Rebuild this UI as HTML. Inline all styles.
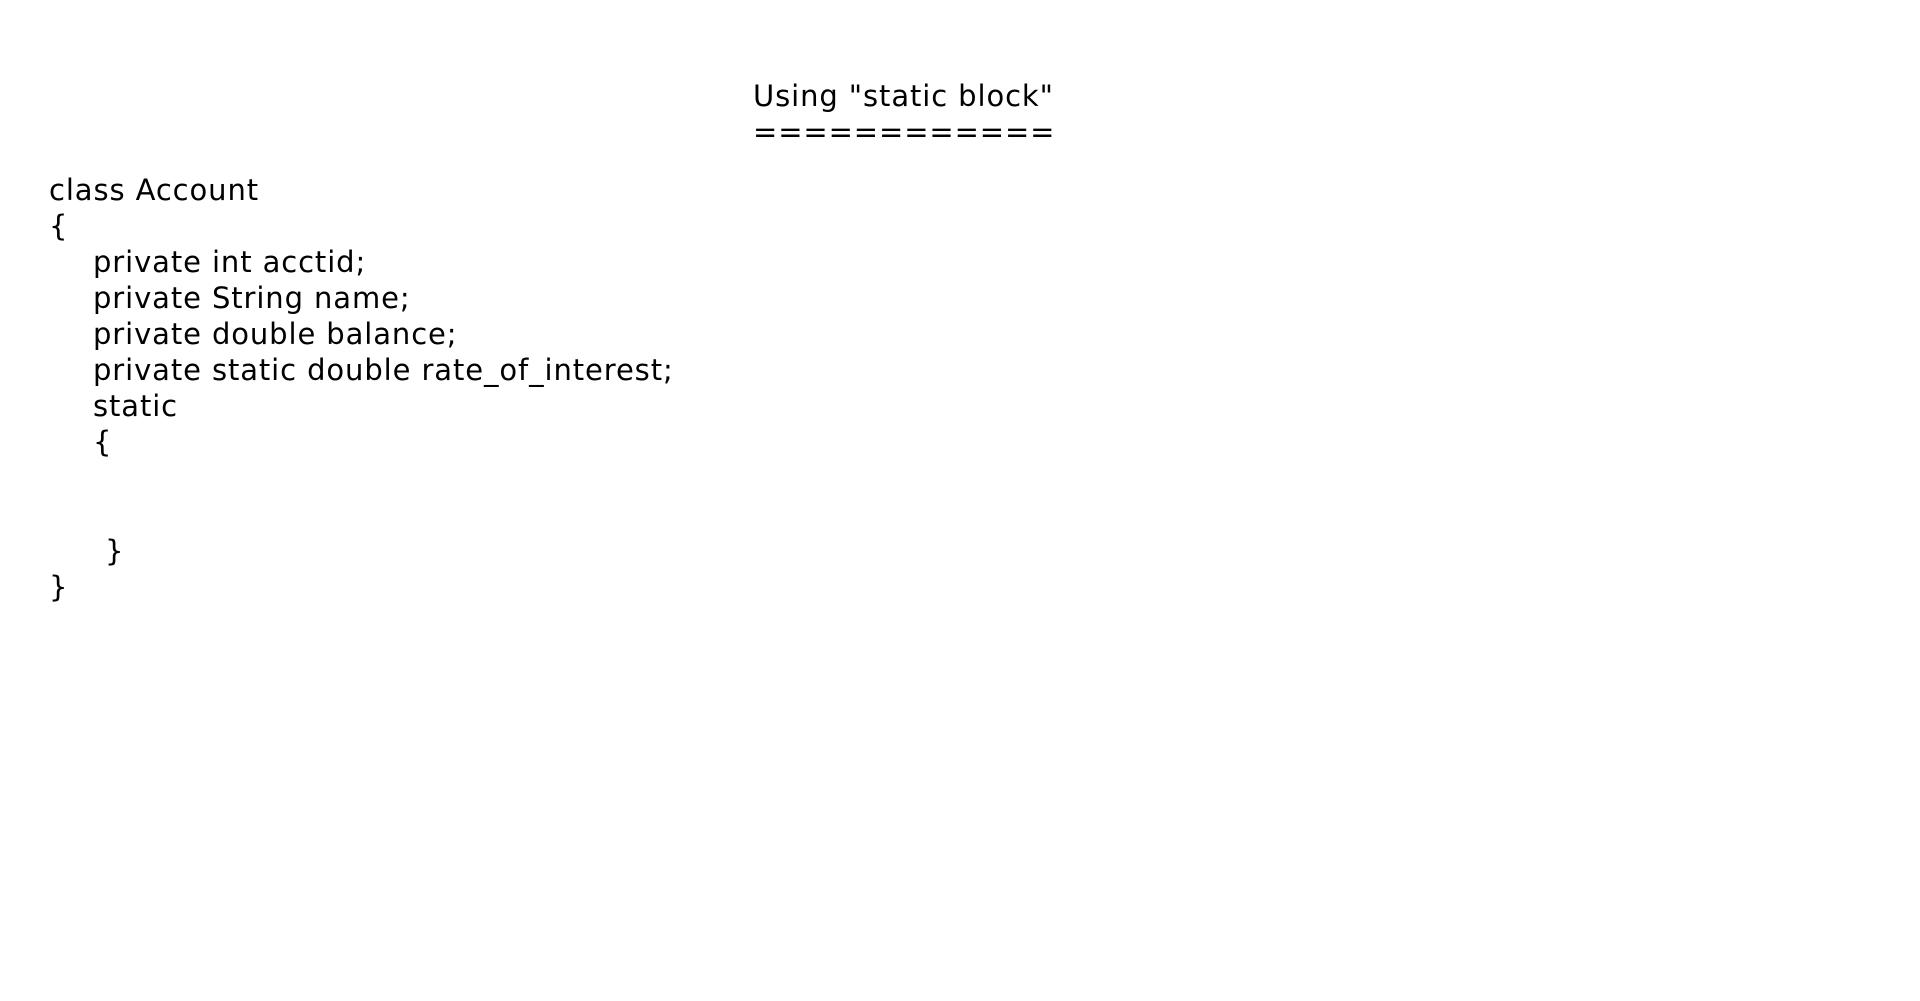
<!DOCTYPE html>
<html><head><meta charset="utf-8"><style>
html,body{margin:0;padding:0;background:#fff;width:1920px;height:1001px;overflow:hidden}
.t{position:absolute;font-family:"DejaVu Sans","Liberation Sans",sans-serif;font-size:29px;line-height:36px;color:#000;white-space:pre;margin:0;letter-spacing:0.9px}
</style></head><body>
<div class="t" style="left:753px;top:78px">Using "static block"
============</div>
<div class="t" style="left:49px;top:172px">class Account
{</div>
<div class="t" style="left:93px;top:244px">private int acctid;
private String name;
private double balance;
private static double rate_of_interest;
static
{</div>
<div class="t" style="left:105px;top:533px">}</div>
<div class="t" style="left:49px;top:569px">}</div>
</body></html>
